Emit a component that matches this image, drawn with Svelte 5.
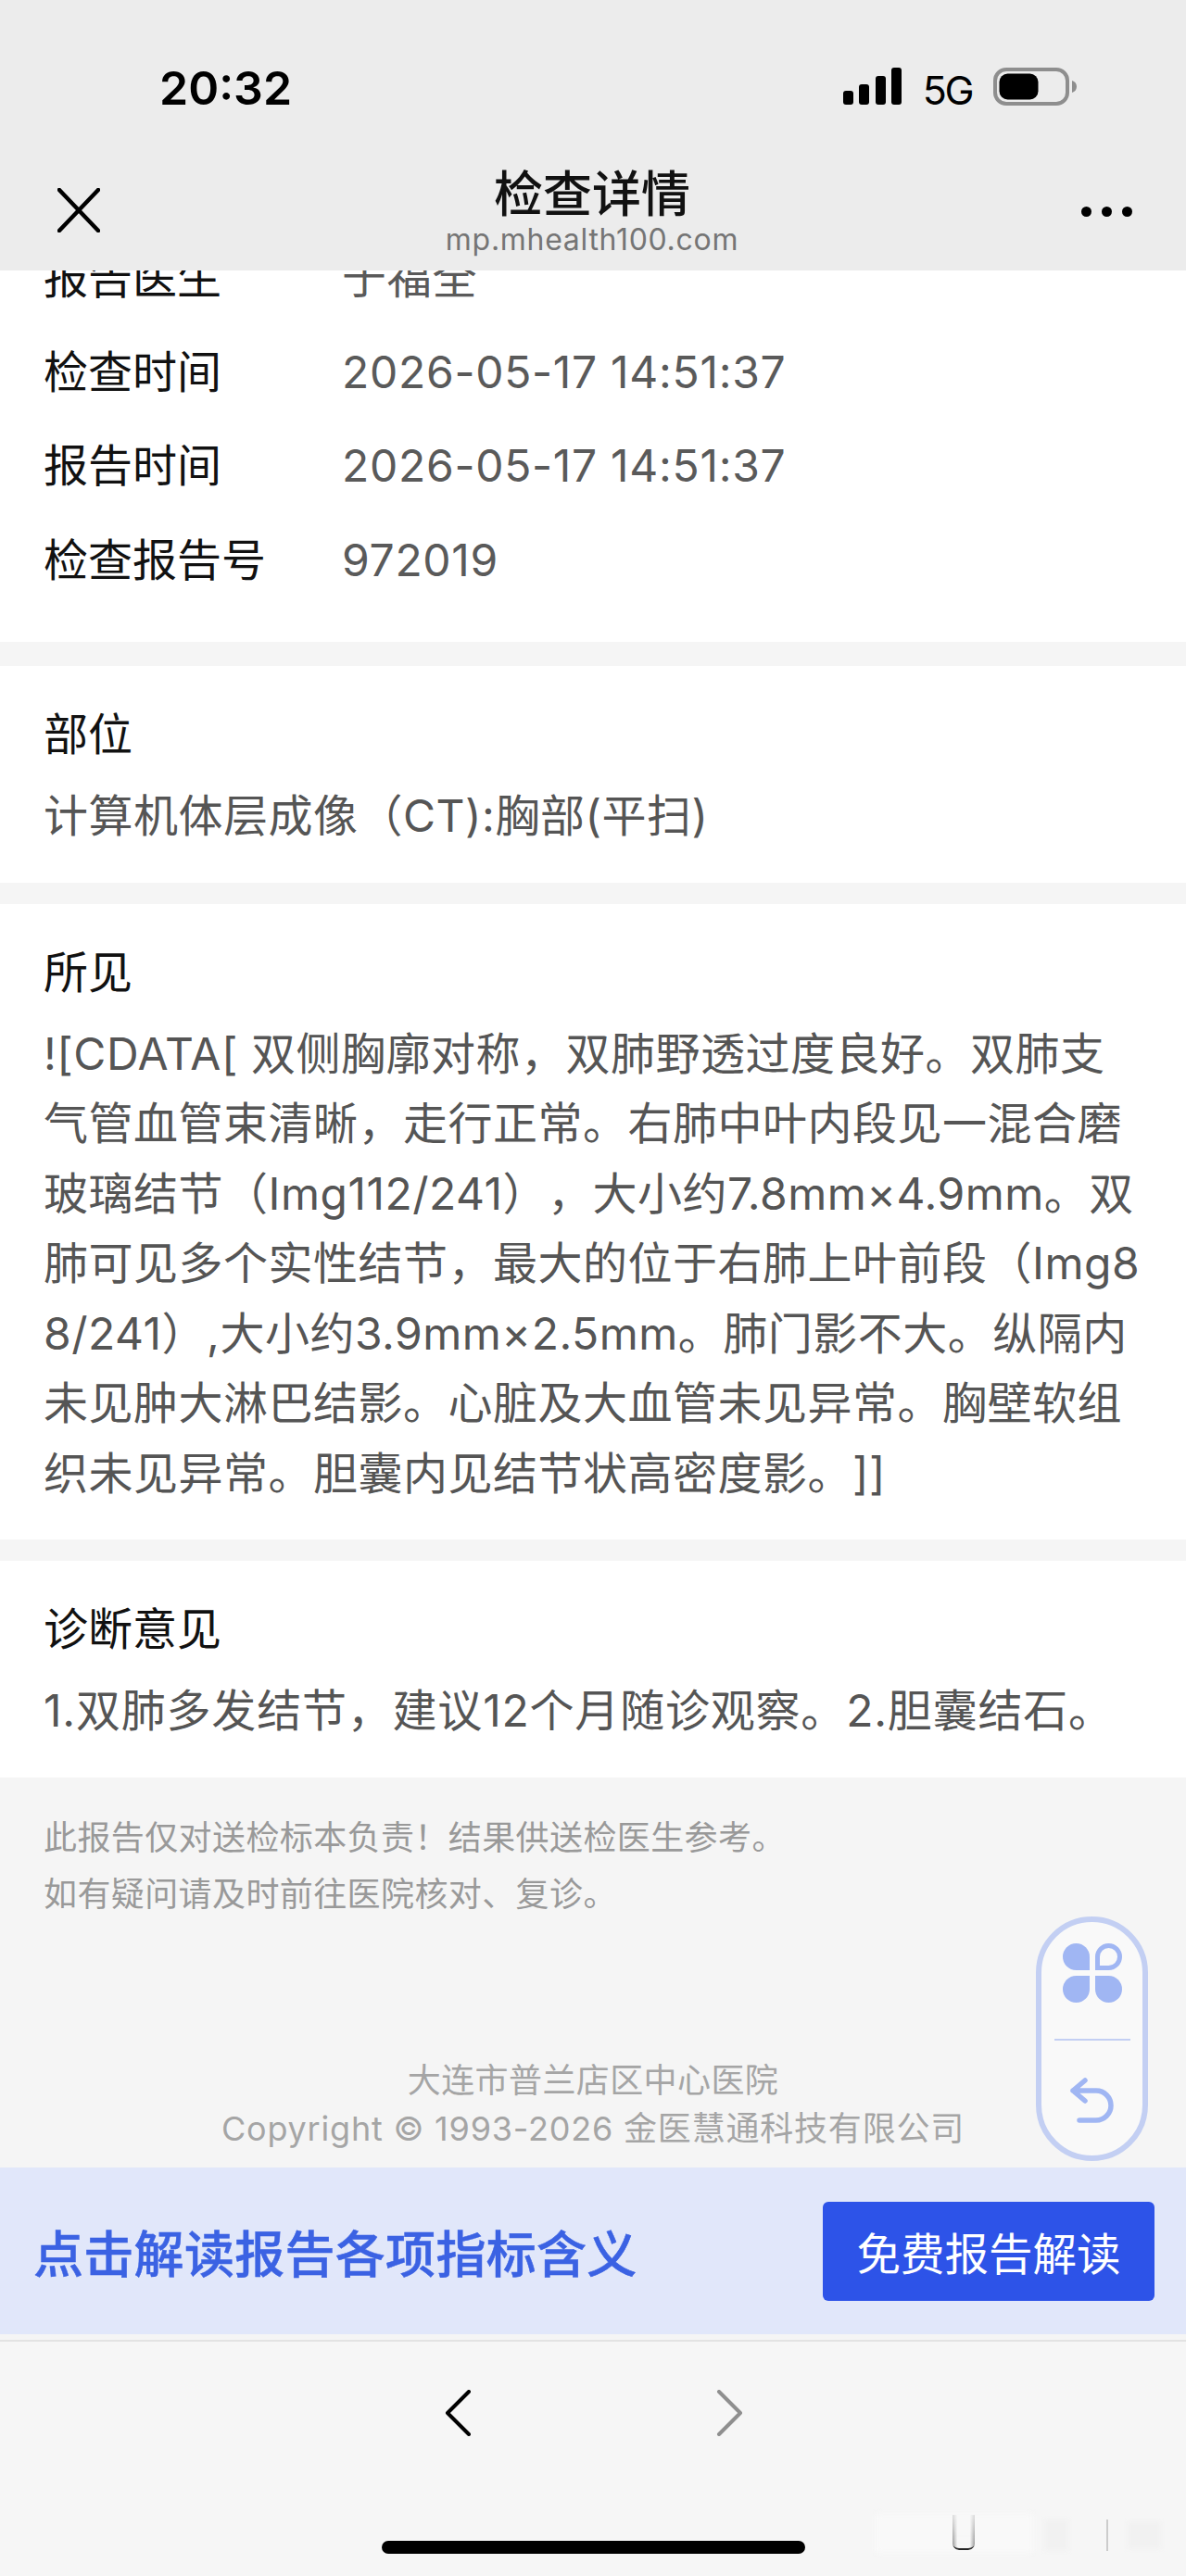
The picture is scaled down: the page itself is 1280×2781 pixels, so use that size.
<script>
  const rows = [
    ['报告医生', '于福全'],
    ['检查时间', '2026-05-17 14:51:37'],
    ['报告时间', '2026-05-17 14:51:37'],
    ['检查报告号', '972019']
  ];
  const bars = [
    [909, 98], [926, 91], [944, 82], [961, 73]
  ];
</script>

<div class="page">
  <header class="top">
    <div class="status">
      <span class="time">20:32</span>
      <div class="status-right">
        <svg class="signal" width="63" height="40" viewBox="0 0 63 40" aria-hidden="true">
          {#each bars as [x, y]}
            <rect x={x - 909} y={y - 73} width="11" height={113 - y} rx="3" fill="#000" />
          {/each}
        </svg>
        <span class="net">5G</span>
        <svg class="battery" width="90" height="41" viewBox="0 0 90 41" aria-hidden="true">
          <rect x="2" y="2" width="78" height="37" rx="12" fill="none" stroke="#8e8e8e" stroke-width="4" />
          <rect x="6.5" y="6.5" width="42" height="28" rx="9" fill="#000" />
          <path d="M85 14c3 1 5 3 5 6.500s-2 5.500-5 6.500z" fill="#8e8e8e" />
        </svg>
      </div>
    </div>
    <nav class="nav">
      <svg class="close" width="46" height="48" viewBox="0 0 46 48" aria-hidden="true">
        <path d="M2 2l42 44M44 2L2 46" fill="none" stroke="#000" stroke-width="4.500" stroke-linecap="round" />
      </svg>
      <div class="nav-title">
        <div class="title">检查详情</div>
        <div class="url">mp.mhealth100.com</div>
      </div>
      <div class="dots"><i></i><i></i><i></i></div>
    </nav>
  </header>

  <main class="scroll">
    <section class="card info">
      {#each rows as [k, v]}
        <div class="row"><span class="k">{k}</span><span class="v">{v}</span></div>
      {/each}
    </section>

    <section class="card">
      <div class="h">部位</div>
      <div class="b">计算机体层成像（CT):胸部(平扫)</div>
    </section>

    <section class="card">
      <div class="h">所见</div>
      <div class="b wrap">![CDATA[ 双侧胸廓对称，双肺野透过度良好。双肺支气管血管束清晰，走行正常。右肺中叶内段见一混合磨玻璃结节（Img112/241），大小约7.8mm×4.9mm。双肺可见多个实性结节，最大的位于右肺上叶前段（Img88/241）,大小约3.9mm×2.5mm。肺门影不大。纵隔内未见肿大淋巴结影。心脏及大血管未见异常。胸壁软组织未见异常。胆囊内见结节状高密度影。]]</div>
    </section>

    <section class="card">
      <div class="h">诊断意见</div>
      <div class="b diag">1.双肺多发结节，建议12个月随诊观察。2.胆囊结石。</div>
    </section>

    <div class="notes">
      <p>此报告仅对送检标本负责！结果供送检医生参考。</p>
      <p>如有疑问请及时前往医院核对、复诊。</p>
    </div>

    <div class="copy">
      <p>大连市普兰店区中心医院</p>
      <p class="copyright">Copyright © 1993-2026 金医慧通科技有限公司</p>
    </div>
  </main>

  <div class="banner">
    <span class="banner-text">点击解读报告各项指标含义</span>
    <button class="cta">免费报告解读</button>
  </div>

  <footer class="bottom">
    <div class="arrows">
      <svg width="30" height="50" viewBox="0 0 30 50" aria-hidden="true">
        <path d="M27 2L4 25l23 23" fill="none" stroke="#000" stroke-width="4" stroke-linecap="round" stroke-linejoin="round" />
      </svg>
      <svg width="30" height="50" viewBox="0 0 30 50" aria-hidden="true">
        <path d="M3 2l23 23L3 48" fill="none" stroke="#8f8f8f" stroke-width="4" stroke-linecap="round" stroke-linejoin="round" />
      </svg>
    </div>
    <div class="home"></div>
  </footer>

  <aside class="pill">
    <svg class="clover" width="64" height="64" viewBox="0 0 64 64" aria-hidden="true">
      <path d="M14.500 0A14.500 14.500 0 0 1 29 14.500V29H14.500A14.500 14.500 0 0 1 14.500 0z" fill="#a0b6f3" />
      <path d="M37.500 26.500V14.500A12 12 0 1 1 49.500 26.500z" fill="none" stroke="#a0b6f3" stroke-width="5" />
      <path d="M29 35V49.500A14.500 14.500 0 1 1 14.500 35z" fill="#a0b6f3" />
      <path d="M35 35H49.500A14.500 14.500 0 1 1 35 49.500z" fill="#a0b6f3" />
    </svg>
    <div class="rule"></div>
    <svg class="undo" width="47" height="49" viewBox="0 0 47 49" aria-hidden="true">
      <path d="M16 3L3 14l13 11M3 14h25a16 16 0 0 1 0 32H10" fill="none" stroke="#a0b6f3" stroke-width="5.500" stroke-linecap="round" stroke-linejoin="round" />
    </svg>
  </aside>

  <div class="mark" aria-hidden="true">
    <i class="smear"></i>
    <i class="cup"></i>
    <i class="patch one"></i>
    <i class="tick"></i>
    <i class="patch two"></i>
  </div>
</div>

<style>
  :global(body) {
    margin: 0;
    background: #f5f5f5;
  }
  .page {
    position: relative;
    width: 1280px;
    height: 2781px;
    display: flex;
    flex-direction: column;
    overflow: hidden;
    background: #f5f5f5;
    font-family: Inter, "Noto Sans CJK SC", sans-serif;
    color: #111;
    text-spacing-trim: space-all;
  }
  .top {
    height: 292px;
    flex: none;
    background: #ececec;
    position: relative;
    z-index: 2;
  }
  .status {
    height: 73px;
    padding: 73px 118px 0 172px;
    display: flex;
    align-items: flex-start;
    justify-content: space-between;
  }
  .time {
    font-size: 50px;
    line-height: 44px;
    font-weight: 600;
    color: #000;
  }
  .status-right {
    display: flex;
    align-items: flex-start;
    gap: 23px;
  }
  .net {
    font-size: 43px;
    line-height: 40px;
    color: #000;
    margin-top: 4px;
    letter-spacing: -2.500px;
  }
  .nav {
    display: grid;
    grid-template-columns: 1fr auto 1fr;
    align-items: start;
    padding: 0 58px 0 56px;
    margin-top: -3px;
  }
  .close {
    margin: 60px 0 0 6px;
  }
  .nav-title {
    text-align: center;
    padding-top: 40px;
  }
  .title {
    font-size: 53px;
    line-height: 54px;
    font-weight: 500;
    color: #111;
  }
  .url {
    font-size: 32px;
    line-height: 36px;
    color: #757575;
    margin-top: 4px;
    letter-spacing: 0.700px;
  }
  .dots {
    justify-self: end;
    display: flex;
    gap: 11px;
    margin-top: 80px;
  }
  .dots i {
    width: 11px;
    height: 11px;
    border-radius: 50%;
    background: #000;
  }
  .scroll {
    flex: 1;
    min-height: 0;
    overflow: hidden;
    display: flex;
    flex-direction: column;
    gap: 23px;
  }
  .card {
    background: #fff;
    padding: 36px 47px 34px;
    flex: none;
  }
  .info {
    padding: 0 47px;
    margin-top: -43px;
    margin-bottom: 3px;
    height: 444px;
    box-sizing: border-box;
  }
  .row {
    height: 101.700px;
    line-height: 101.700px;
    font-size: 48px;
    display: flex;
  }
  .k {
    width: 322px;
    color: #111;
  }
  .v {
    color: #5a5a5a;
    letter-spacing: 0.700px;
  }
  .h {
    font-size: 48px;
    line-height: 75px;
    margin-bottom: 13px;
    color: #111;
  }
  .b {
    font-size: 48px;
    line-height: 75.500px;
    color: #555;
    letter-spacing: 0.500px;
  }
  .wrap {
    word-break: break-all;
  }
  .diag {
    letter-spacing: 0.800px;
  }
  .notes {
    padding: 35.500px 47px 0;
    margin-top: -23px;
    font-size: 36px;
    line-height: 60.500px;
    color: #999;
    letter-spacing: 0.400px;
  }
  .notes p,
  .copy p {
    margin: 0;
  }
  .copy {
    margin-top: 122px;
    text-align: center;
    font-size: 36px;
    line-height: 52px;
    color: #a5a5a5;
    letter-spacing: 0.400px;
  }
  .copy .copyright {
    letter-spacing: 0.800px;
  }
  .banner {
    height: 180px;
    flex: none;
    background: #e1e7fa;
    display: flex;
    align-items: center;
    justify-content: space-between;
    padding: 0 34px 0 36px;
    box-sizing: border-box;
  }
  .banner-text {
    font-size: 54px;
    font-weight: 500;
    color: #3b62e3;
    letter-spacing: 0.300px;
    -webkit-text-stroke: 0.500px #3b62e3;
  }
  .cta {
    width: 358px;
    height: 107px;
    border: 0;
    border-radius: 6px;
    background: #2d53e8;
    color: #fff;
    font: inherit;
    font-size: 47.500px;
    padding: 0;
  }
  .bottom {
    height: 255px;
    flex: none;
    box-sizing: border-box;
    background: #f6f6f6;
    border-top: 2px solid #e3e3e3;
    margin-top: 6px;
  }
  .arrows {
    display: flex;
    justify-content: center;
    gap: 264px;
    padding-top: 52px;
    margin-left: 1px;
  }
  .home {
    width: 457px;
    height: 14px;
    border-radius: 7px;
    background: #000;
    margin: 113px auto 0;
  }
  .pill {
    position: absolute;
    left: 1118px;
    top: 2069px;
    width: 121px;
    height: 264px;
    box-sizing: border-box;
    border: 6px solid #c3cff3;
    border-radius: 61px;
    background: #f9f9f9;
    display: flex;
    flex-direction: column;
    align-items: center;
    z-index: 3;
  }
  .clover {
    margin-top: 23px;
    flex: none;
  }
  .rule {
    width: 82px;
    height: 2px;
    background: #c3cff3;
    margin-top: 39px;
    flex: none;
  }
  .undo {
    margin-top: 40px;
    flex: none;
  }
  .mark {
    position: absolute;
    left: 945px;
    top: 2712px;
    width: 310px;
    height: 48px;
  }
  .mark i {
    position: absolute;
    display: block;
  }
  .smear {
    left: 0;
    top: 2px;
    width: 170px;
    height: 42px;
    background: #f9f9f9;
    filter: blur(3px);
  }
  .cup {
    left: 83px;
    top: 3px;
    width: 24px;
    height: 38px;
    box-sizing: border-box;
    border-bottom: 2px solid #222;
    border-radius: 0 0 7px 7px;
    background: linear-gradient(90deg, #8c8c8c, #f7f7f7 22%, #f7f7f7 78%, #8c8c8c);
    -webkit-mask-image: linear-gradient(180deg, rgba(0, 0, 0, 0.25), #000);
    mask-image: linear-gradient(180deg, rgba(0, 0, 0, 0.25), #000);
  }
  .patch {
    background: #f1f1f1;
    filter: blur(2px);
  }
  .one {
    left: 182px;
    top: 8px;
    width: 26px;
    height: 34px;
  }
  .tick {
    left: 249px;
    top: 8px;
    width: 2px;
    height: 34px;
    background: #ccc;
  }
  .two {
    left: 272px;
    top: 10px;
    width: 36px;
    height: 30px;
  }
</style>
